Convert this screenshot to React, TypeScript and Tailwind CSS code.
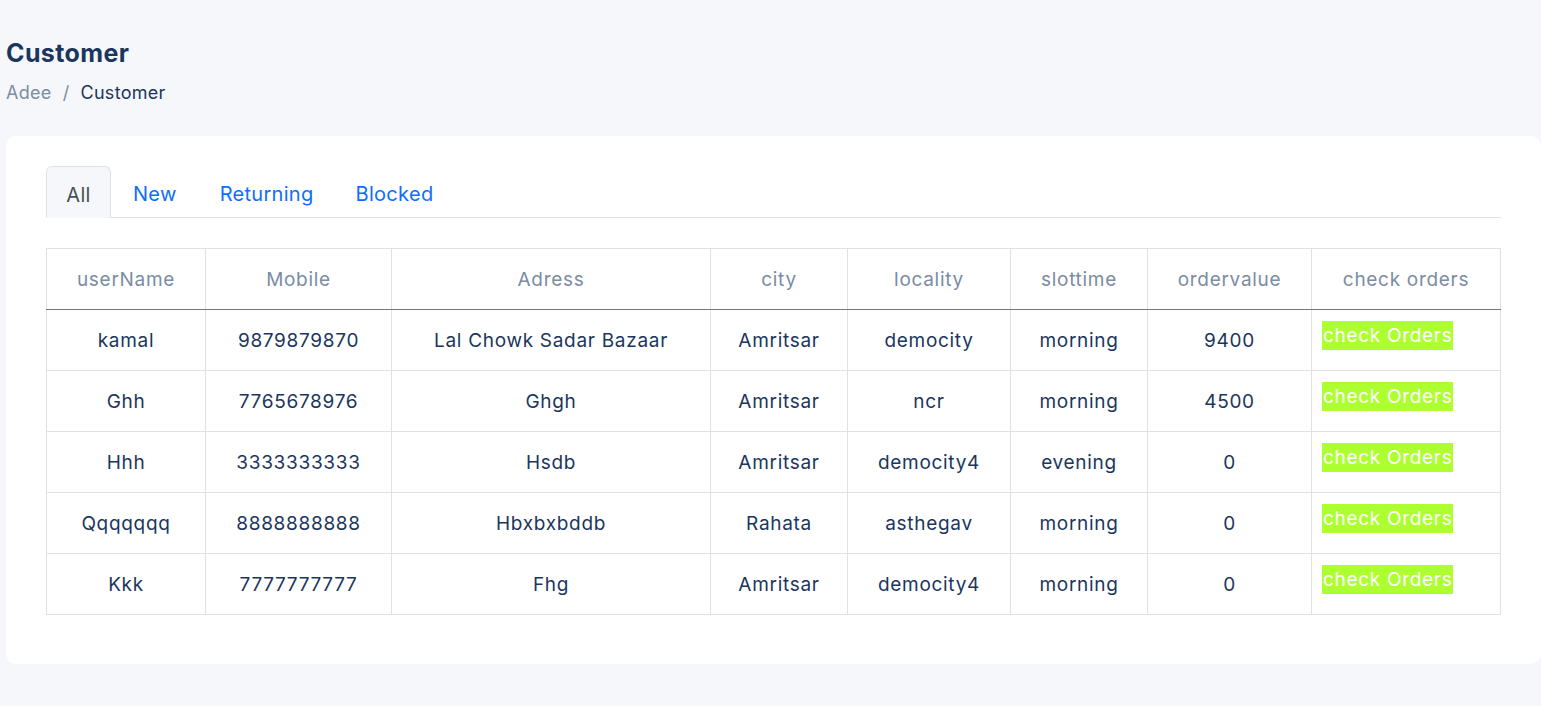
import React from "react";

type Row = {
  userName: string;
  mobile: string;
  address: string;
  city: string;
  locality: string;
  slottime: string;
  ordervalue: string;
};

const rows: Row[] = [
  { userName: "kamal", mobile: "9879879870", address: "Lal Chowk Sadar Bazaar", city: "Amritsar", locality: "democity", slottime: "morning", ordervalue: "9400" },
  { userName: "Ghh", mobile: "7765678976", address: "Ghgh", city: "Amritsar", locality: "ncr", slottime: "morning", ordervalue: "4500" },
  { userName: "Hhh", mobile: "3333333333", address: "Hsdb", city: "Amritsar", locality: "democity4", slottime: "evening", ordervalue: "0" },
  { userName: "Qqqqqqq", mobile: "8888888888", address: "Hbxbxbddb", city: "Rahata", locality: "asthegav", slottime: "morning", ordervalue: "0" },
  { userName: "Kkk", mobile: "7777777777", address: "Fhg", city: "Amritsar", locality: "democity4", slottime: "morning", ordervalue: "0" },
];

const headers = ["userName", "Mobile", "Adress", "city", "locality", "slottime", "ordervalue", "check orders"];
const colWidths = ["w-[159px]", "w-[186px]", "w-[319px]", "w-[137px]", "w-[163px]", "w-[137px]", "w-[164px]", "w-[189px]"];

export default function App() {
  return (
    <div className="min-h-[706px] bg-[#f6f7fb] pl-[6px] pt-[37px] font-['Inter','Open_Sans',sans-serif] text-[#1b365d]">
      {/* Page header */}
      <h1 className="text-[25px] font-bold leading-[32px] tracking-[0.4px] text-[#1b365d]">Customer</h1>
      <div className="mt-[12px] flex items-center text-[18px] leading-[24px] tracking-[0.3px]">
        <span className="text-[#7b8ca3]">Adee</span>
        <span className="mx-[11px] text-[#7b8ca3]">/</span>
        <span className="text-[#1b365d]">Customer</span>
      </div>

      {/* Card */}
      <div className="mt-[31px] h-[528px] rounded-[10px] bg-white px-[40px] pt-[30px]">
        {/* Tabs */}
        <div className="flex border-b border-[#dee2e6] text-[20px] tracking-[0.3px]">
          <div className="-mb-px flex h-[52px] w-[65px] items-center justify-center rounded-t-[6px] border border-b-0 border-[#dee2e6] bg-[#f6f7fb] pt-[4px] text-[#495057]">
            All
          </div>
          <div className="flex h-[51px] items-center px-[22px] pt-[4px] text-[#0d6efd]">New</div>
          <div className="flex h-[51px] items-center px-[21px] pt-[4px] text-[#0d6efd]">Returning</div>
          <div className="flex h-[51px] items-center px-[21px] pt-[4px] text-[#0d6efd]">Blocked</div>
        </div>

        {/* Table */}
        <table className="mt-[30px] w-[1455px] table-fixed border-collapse text-[19px] tracking-[0.7px]">
          <thead>
            <tr className="h-[61px] border-b border-[#6c7a8c]">
              {headers.map((h, i) => (
                <th key={h} className={`${colWidths[i]} border border-[#dee2e6] border-b-[#6c7a8c] pt-[3px] text-center font-normal text-[#7b8ca3]`}>
                  {h}
                </th>
              ))}
            </tr>
          </thead>
          <tbody>
            {rows.map((r) => (
              <tr key={r.mobile} className="h-[61px]">
                <td className="border border-[#dee2e6] pt-[3px] text-center">{r.userName}</td>
                <td className="border border-[#dee2e6] pt-[3px] text-center">{r.mobile}</td>
                <td className="border border-[#dee2e6] pt-[3px] text-center">{r.address}</td>
                <td className="border border-[#dee2e6] pt-[3px] text-center">{r.city}</td>
                <td className="border border-[#dee2e6] pt-[3px] text-center">{r.locality}</td>
                <td className="border border-[#dee2e6] pt-[3px] text-center">{r.slottime}</td>
                <td className="border border-[#dee2e6] pt-[3px] text-center">{r.ordervalue}</td>
                <td className="border border-[#dee2e6] px-[10px] pt-[11px] align-top">
                  <span className="inline-block bg-[#adff2f] px-px pt-px text-[19px] leading-[28px] text-white">check Orders</span>
                </td>
              </tr>
            ))}
          </tbody>
        </table>
      </div>
    </div>
  );
}
